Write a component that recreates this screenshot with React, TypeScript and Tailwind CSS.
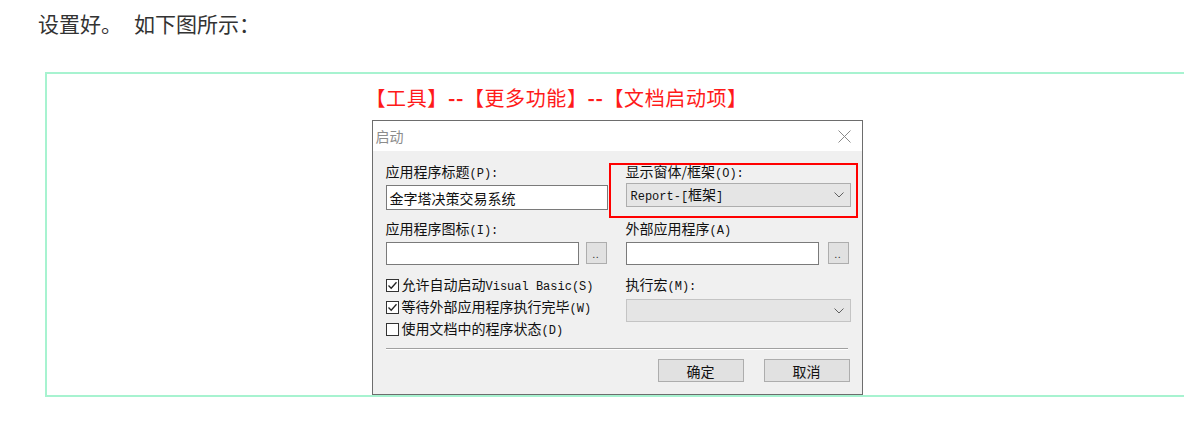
import React from "react";

const M = ({ children }: { children: React.ReactNode }) => (
  <span className="font-['Liberation_Mono',monospace] text-[12px]">{children}</span>
);

const Chevron = () => (
  <svg width="10" height="6" viewBox="0 0 10 6" className="shrink-0">
    <polyline points="0.5,0.5 5,5 9.5,0.5" fill="none" stroke="#606060" strokeWidth="1" />
  </svg>
);

const Check = ({ checked }: { checked: boolean }) => (
  <div className="w-[13px] h-[13px] border border-[#333] bg-white flex items-center justify-center shrink-0">
    {checked && (
      <svg width="11" height="11" viewBox="0 0 11 11">
        <polyline points="1.5,5.5 4.2,8.3 9.5,2.2" fill="none" stroke="#222" strokeWidth="1.3" />
      </svg>
    )}
  </div>
);

const Input = ({ h, children }: { h: string; children?: React.ReactNode }) => (
  <div className={`bg-white border border-[#7a7a7a] flex items-center px-[2px] ${h}`}>{children}</div>
);

const DotBtn = () => (
  <div className="w-[21px] h-[22px] border border-[#adadad] bg-[#e1e1e1] flex items-end justify-center pb-[4px]">
    <span className="text-[9px] leading-[9px] text-[#333] tracking-[1px]">..</span>
  </div>
);

export default function App() {
  return (
    <div className="w-[1184px] h-[433px] overflow-hidden bg-white font-['Noto_Sans_CJK_SC',sans-serif]">
      <p className="pl-[38px] pt-[9px] text-[21px] leading-[28px] text-[#333]">
        设置好。<span className="inline-block w-[12px]" />如下图所示：
      </p>
      <div className="ml-[45px] mt-[35px] w-[1144px] h-[325px] border-2 border-[#a7f3d0] flex justify-center overflow-hidden">
        <div className="w-[491px] flex flex-col">
          <div className="pt-[10px] -ml-[6px] text-[20px] leading-[28px] text-[#ff1a1a] whitespace-nowrap tracking-[0.6px]">
            【工具】<span className="font-bold">--</span>【更多功能】<span className="font-bold">--</span>【文档启动项】
          </div>
          <div className="mt-[8px] border border-[#6d6d6d] bg-[#f0f0f0] relative text-[14px] leading-[16px] text-[#111]">
            {/* title bar */}
            <div className="h-[30px] bg-white flex items-center justify-between pl-[3px] pr-[11px]">
              <span className="text-[#8c8c8c]">启动</span>
              <svg width="13" height="13" viewBox="0 0 13 13">
                <path d="M0.5 0.5 L12.5 12.5 M12.5 0.5 L0.5 12.5" stroke="#8a8a8a" strokeWidth="1" />
              </svg>
            </div>
            {/* body */}
            <div className="pl-[13px] pr-[10px] pb-[12px]">
              <div className="flex gap-[18px]">
                {/* left column */}
                <div className="w-[222px] flex flex-col">
                  <div className="mt-[12px] h-[16px] whitespace-nowrap">
                    应用程序标题<M>(P):</M>
                  </div>
                  <div className="mt-[6px]">
                    <Input h="h-[25px]">
                      <span className="pl-[1px]">金字塔决策交易系统</span>
                    </Input>
                  </div>
                  <div className="mt-[10px] h-[16px] whitespace-nowrap">
                    应用程序图标<M>(I):</M>
                  </div>
                  <div className="mt-[6px] flex gap-[7px] items-start">
                    <div className="w-[193px]">
                      <Input h="h-[23px]" />
                    </div>
                    <DotBtn />
                  </div>
                  <div className="mt-[9px] flex flex-col">
                    <div className="h-[22px] flex items-center gap-[3px] whitespace-nowrap leading-[22px]">
                      <Check checked />
                      <span>
                        允许自动启动<M>Visual Basic(S)</M>
                      </span>
                    </div>
                    <div className="h-[22px] flex items-center gap-[3px] whitespace-nowrap leading-[22px]">
                      <Check checked />
                      <span>
                        等待外部应用程序执行完毕<M>(W)</M>
                      </span>
                    </div>
                    <div className="h-[22px] flex items-center gap-[3px] whitespace-nowrap leading-[22px]">
                      <Check checked={false} />
                      <span>
                        使用文档中的程序状态<M>(D)</M>
                      </span>
                    </div>
                  </div>
                </div>
                {/* right column */}
                <div className="w-[225px] flex flex-col">
                  <div className="mt-[12px] h-[16px] whitespace-nowrap">
                    显示窗体/框架<M>(O):</M>
                  </div>
                  <div className="mt-[4px] h-[24px] border border-[#adadad] bg-[#e5e5e5] flex items-center justify-between pl-[4px] pr-[6px]">
                    <span className="whitespace-nowrap">
                      <M>Report-[</M>框架<M>]</M>
                    </span>
                    <Chevron />
                  </div>
                  <div className="mt-[13px] h-[16px] whitespace-nowrap">
                    外部应用程序<M>(A)</M>
                  </div>
                  <div className="mt-[6px] flex gap-[9px] items-start">
                    <div className="w-[193px]">
                      <Input h="h-[23px]" />
                    </div>
                    <DotBtn />
                  </div>
                  <div className="mt-[11px] h-[16px] whitespace-nowrap">
                    执行宏<M>(M):</M>
                  </div>
                  <div className="mt-[7px] h-[23px] border border-[#c4c4c4] bg-[#e5e5e5] flex items-center justify-end pr-[6px]">
                    <Chevron />
                  </div>
                </div>
              </div>
              <div className="mt-[8px] mr-[4px] h-[2px] border-t border-[#a0a0a0] border-b border-b-white" />
              <div className="mt-[9px] flex justify-end gap-[20px] pr-[2px]">
                <div className="w-[86px] h-[23px] border border-[#adadad] bg-[#e1e1e1] flex items-center justify-center">
                  确定
                </div>
                <div className="w-[86px] h-[23px] border border-[#adadad] bg-[#e1e1e1] flex items-center justify-center">
                  取消
                </div>
              </div>
            </div>
            {/* red annotation box */}
            <div className="absolute left-[236px] top-[42px] w-[249px] h-[55px] border-2 border-[#ff0000]" />
          </div>
        </div>
      </div>
    </div>
  );
}
